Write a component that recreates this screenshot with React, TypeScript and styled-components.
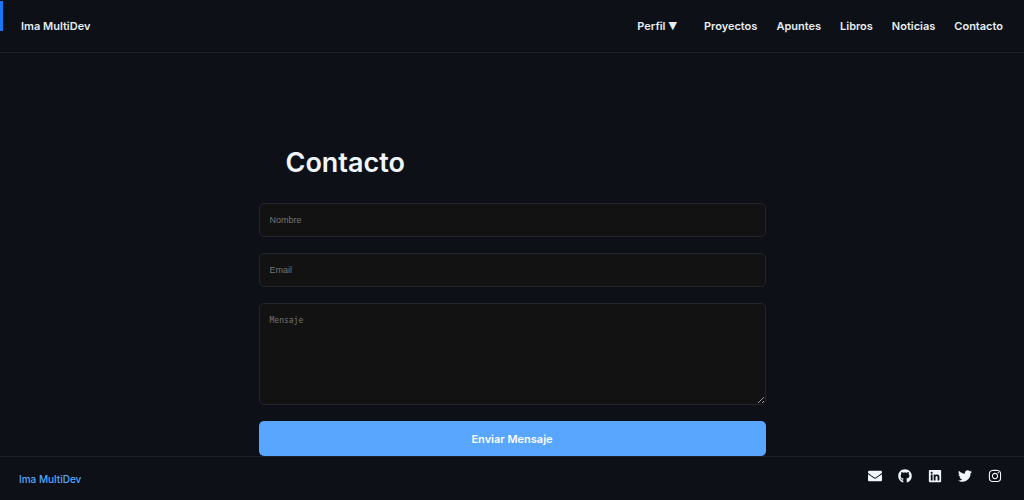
import React from 'react';
import styled, { createGlobalStyle } from 'styled-components';
import { FaEnvelope, FaGithub, FaLinkedin, FaTwitter, FaInstagram } from 'react-icons/fa';

const GlobalStyle = createGlobalStyle`
  *, *::before, *::after { box-sizing: border-box; }
  body {
    margin: 0;
    background: #0d1117;
    color: #f0f6fc;
    font-family: Inter, sans-serif;
  }
`;

const Page = styled.div`
  display: flex;
  flex-direction: column;
  min-height: 100vh;
`;

const Header = styled.header`
  position: relative;
  display: flex;
  align-items: center;
  justify-content: space-between;
  height: 53px;
  padding: 0 21px;
  border-bottom: 1px solid #1b1f27;
`;

const Marker = styled.span`
  position: absolute;
  top: 1px;
  left: 0;
  width: 3px;
  height: 30px;
  background: #1877f2;
`;

const Brand = styled.a`
  color: #e6edf3;
  font-size: 11px;
  font-weight: 600;
  text-decoration: none;
`;

const Nav = styled.nav`
  display: flex;
  align-items: center;
  gap: 19px;
`;

const NavLink = styled.a`
  color: #e6edf3;
  font-size: 11px;
  font-weight: 600;
  line-height: 16px;
  text-decoration: none;
`;

const MenuButton = styled.button`
  display: flex;
  align-items: center;
  gap: 3px;
  padding: 0 8px 0 0;
  border: 0;
  background: none;
  color: #e6edf3;
  font: 600 11px/16px Inter, sans-serif;
`;

const Caret = styled.span`
  font-family: "DejaVu Sans", sans-serif;
  font-weight: 400;
`;

const Main = styled.main`
  flex: 1;
  width: 100%;
  max-width: 507px;
  margin: 0 auto;
  padding-top: 91px;
`;

const Title = styled.h1`
  margin: 0 0 21px;
  padding-left: 27px;
  font-size: 27px;
  font-weight: 600;
  line-height: 38px;
`;

const Form = styled.form`
  display: flex;
  flex-direction: column;
  gap: 16px;
`;

const Field = styled.input`
  height: 34px;
  padding: 0 10px;
  border: 1px solid #22262b;
  border-radius: 5px;
  background: #121212;
  color: #f0f6fc;
  font: 9px "Liberation Sans", Arial, sans-serif;
  &::placeholder { color: #757575; }
`;

const MessageField = styled.textarea`
  display: block;
  height: 102px;
  padding: 11px 10px;
  border: 1px solid #22262b;
  border-radius: 5px;
  background: #121212;
  color: #f0f6fc;
  font: 8px/12px "DejaVu Sans Mono", monospace;
  resize: vertical;
  &::placeholder { color: #757575; }
`;

const SubmitButton = styled.button`
  height: 35px;
  border: 0;
  border-radius: 5px;
  background: #58a6ff;
  color: #ffffff;
  font: 600 11px Inter, sans-serif;
`;

const Footer = styled.footer`
  display: flex;
  align-items: center;
  justify-content: space-between;
  height: 44px;
  padding: 0 22px 0 19px;
  border-top: 1px solid #1b1f27;
`;

const FooterLink = styled.a`
  color: #58a6ff;
  font-size: 10px;
  font-weight: 500;
  text-decoration: none;
`;

const Social = styled.div`
  display: flex;
  gap: 16px;
  padding-bottom: 5px;
`;

const SocialLink = styled.a`
  display: flex;
  color: #f0f6fc;
  font-size: 14px;
`;

const links = ['Proyectos', 'Apuntes', 'Libros', 'Noticias', 'Contacto'];

const networks = [
  { name: 'Correo', Icon: FaEnvelope },
  { name: 'GitHub', Icon: FaGithub },
  { name: 'LinkedIn', Icon: FaLinkedin },
  { name: 'Twitter', Icon: FaTwitter },
  { name: 'Instagram', Icon: FaInstagram },
];

export default function App() {
  return (
    <Page>
      <GlobalStyle />
      <Header>
        <Marker />
        <Brand href="#">Ima MultiDev</Brand>
        <Nav>
          <MenuButton type="button">Perfil <Caret>▼</Caret></MenuButton>
          {links.map((name) => (
            <NavLink key={name} href={`#${name.toLowerCase()}`}>{name}</NavLink>
          ))}
        </Nav>
      </Header>
      <Main>
        <Title>Contacto</Title>
        <Form>
          <Field type="text" name="nombre" placeholder="Nombre" aria-label="Nombre" />
          <Field type="email" name="email" placeholder="Email" aria-label="Email" />
          <MessageField name="mensaje" placeholder="Mensaje" aria-label="Mensaje" />
          <SubmitButton type="submit">Enviar Mensaje</SubmitButton>
        </Form>
      </Main>
      <Footer>
        <FooterLink href="#">Ima MultiDev</FooterLink>
        <Social>
          {networks.map(({ name, Icon }) => (
            <SocialLink key={name} href="#" aria-label={name}><Icon /></SocialLink>
          ))}
        </Social>
      </Footer>
    </Page>
  );
}
